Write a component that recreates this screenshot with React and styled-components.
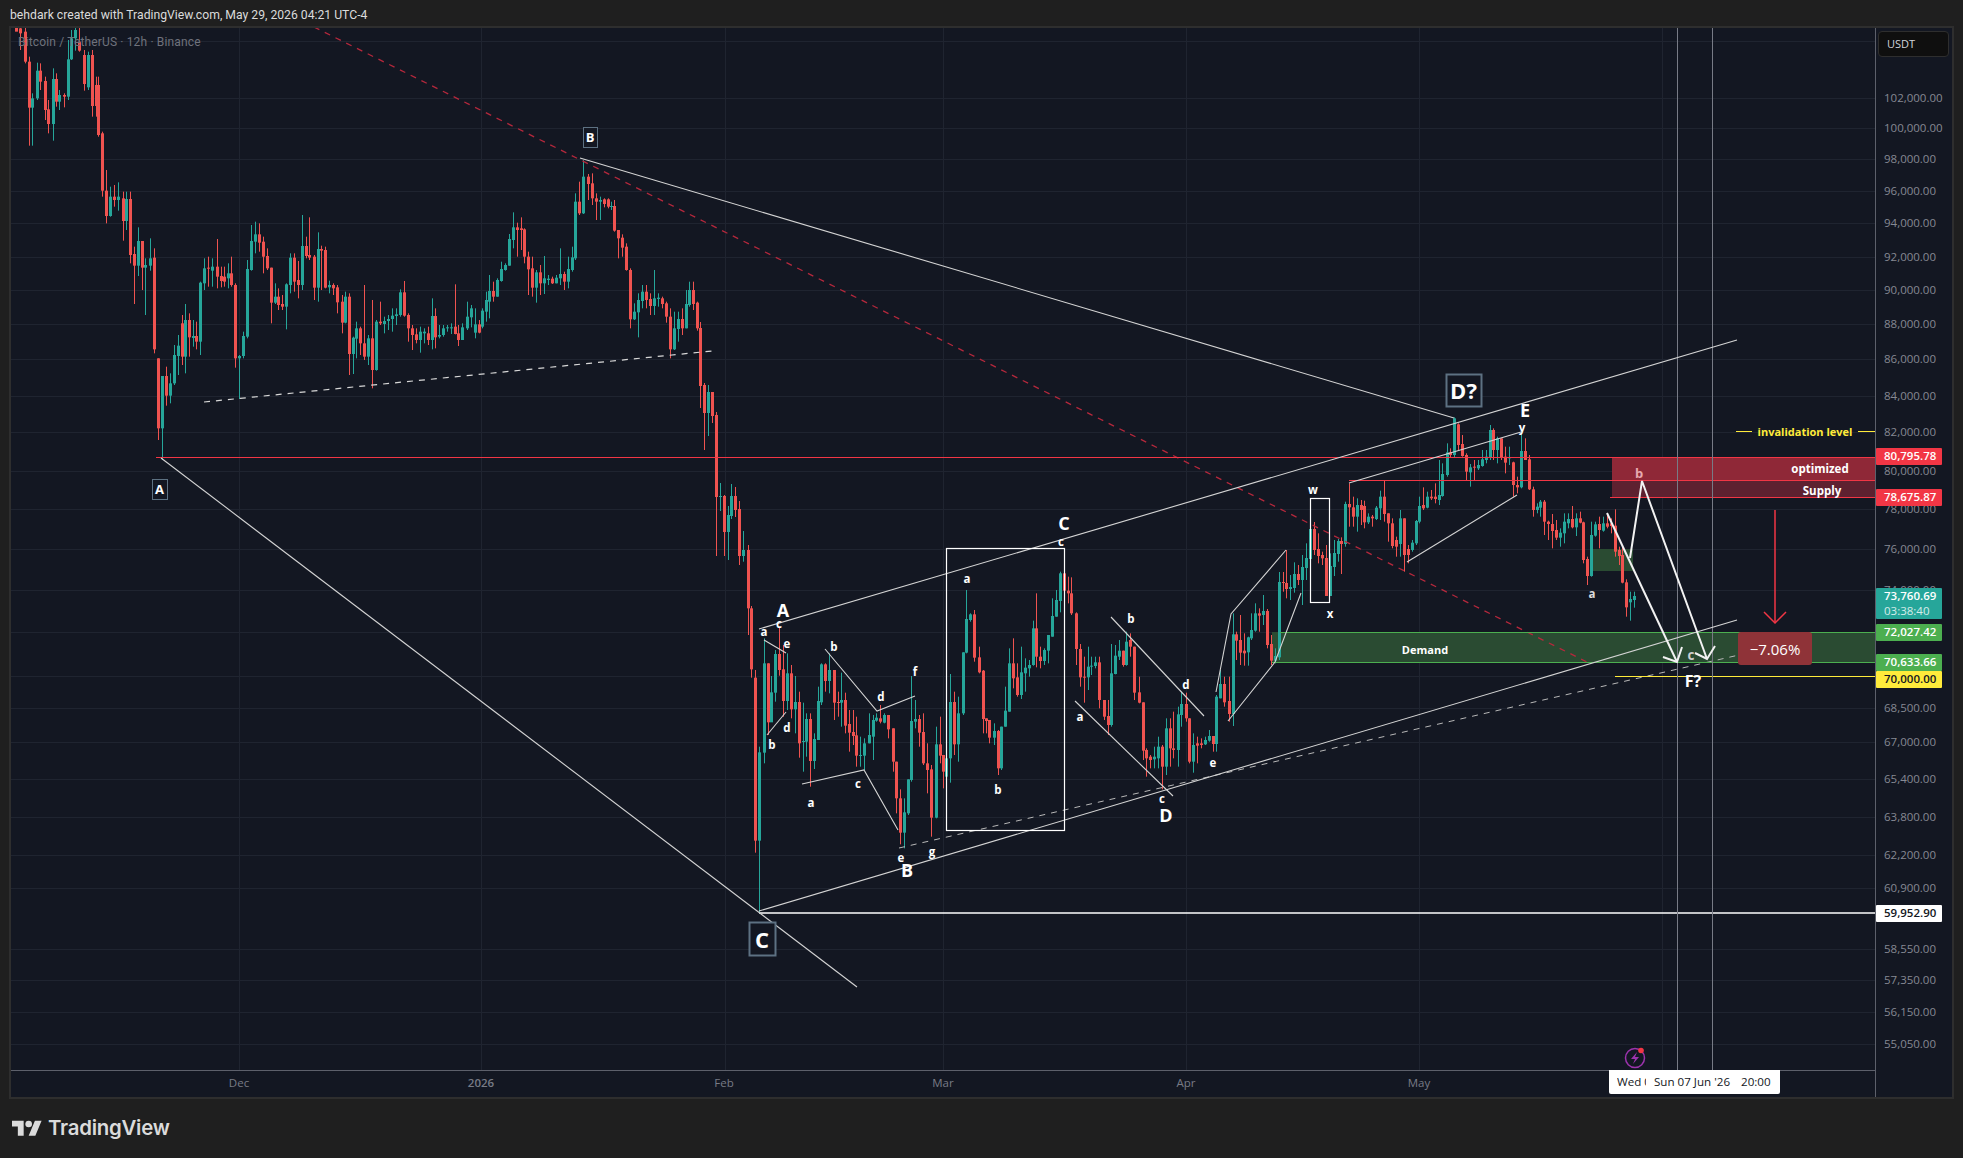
import React from "react";
import styled, { createGlobalStyle } from "styled-components";

const Global = createGlobalStyle`
  html, body { margin: 0; padding: 0; background: #1f1f1f; }
  body { font-family: "Open Sans", "Noto Sans", sans-serif; }
`;

const Page = styled.div`
  width: 1963px;
  height: 1158px;
  display: flex;
  flex-direction: column;
  background: #1f1f1f;
  overflow: hidden;
`;
const Header = styled.header`
  height: 26px;
  flex: none;
  padding: 4px 0 0 10px;
  box-sizing: border-box;
  display: flex;
  align-items: center;
  color: #dbdbdb;
  font: 400 12.2px/1 Roboto, "Open Sans", sans-serif;
`;
const Frame = styled.main`
  flex: none;
  width: 1941px;
  height: 1069px;
  margin-left: 9px;
  display: grid;
  grid-template-columns: 1865px 76px;
  grid-template-rows: 1043px 26px;
  background: #131722;
  border: 2px solid #2e2e2e;
`;
const Plot = styled.section`
  position: relative;
  border-right: 1px solid #5d606b;
  border-bottom: 1px solid #5d606b;
  overflow: hidden;
`;
const ChartSvg = styled.svg`
  display: block;
  width: 1864px;
  height: 1042px;
`;
const SymbolTitle = styled.div`
  position: absolute;
  left: 7px;
  top: 7px;
  color: #6f727c;
  font: 400 12px/1.2 Roboto, sans-serif;
  letter-spacing: 0.15px;
`;
const PriceAxis = styled.aside`
  position: relative;
  overflow: hidden;
  padding: 3px 3px 0 2px;
`;
const UnitBox = styled.div`
  height: 26px;
  box-sizing: border-box;
  background: #0f0f0f;
  border: 1px solid #2e2e2e;
  border-radius: 4px;
  color: #d1d4dc;
  font: 400 11px/24px "Open Sans", sans-serif;
  padding-left: 8px;
`;
const PriceTick = styled.span.attrs((p) => ({ style: { top: p.$y - 28 - 8 } }))`
  position: absolute;
  left: 8px;
  color: #868993;
  font: 400 11.5px/16px "Open Sans", sans-serif;
  white-space: nowrap;
`;
const PriceTag = styled.div.attrs((p) => ({ style: { top: p.$y - 28 } }))`
  position: absolute;
  left: 0;
  width: 66px;
  height: ${(p) => p.$h || 17}px;
  box-sizing: border-box;
  padding-left: 8px;
  border-radius: 1px;
  background: ${(p) => p.$bg};
  color: ${(p) => p.$fg};
  font: 600 11.5px/16px "Open Sans", sans-serif;
  white-space: nowrap;
`;
const Countdown = styled.div`
  line-height: 13px;
  font-weight: 400;
  opacity: 0.8;
`;
const TimeAxis = styled.nav`
  position: relative;
  overflow: visible;
  color: #787b86;
  font: 400 11.5px/1 "Open Sans", sans-serif;
`;
const TimeLabel = styled.span.attrs((p) => ({ style: { left: p.$x - 11 } }))`
  position: absolute;
  top: 6px;
  transform: translateX(-50%);
  font-weight: ${(p) => (p.$strong ? 600 : 400)};
`;
const CrossTip = styled.div`
  position: absolute;
  left: 1598px;
  top: -1px;
  width: 171px;
  height: 24px;
  display: flex;
  align-items: center;
  background: #fff;
  border-radius: 0 0 2px 2px;
  color: #131722;
  font: 400 11.6px/1 "Open Sans", sans-serif;
  white-space: nowrap;
`;
const CutDate = styled.span`
  width: 29px;
  margin: 0 8px 0 8px;
  overflow: hidden;
`;
const TipTime = styled.span`
  margin-left: 11px;
`;
const AxisCorner = styled.div`
  border-left: 1px solid #5d606b;
  margin-left: -1px;
`;
const Footer = styled.footer`
  flex: 1;
  display: flex;
  align-items: center;
  gap: 6px;
  padding: 0 0 0 12px;
  color: #dbdbdb;
  font: 600 20.4px/1 Inter, sans-serif;
  letter-spacing: -0.25px;
`;
const Note = styled.text`
  font-family: "Open Sans", sans-serif;
  font-weight: ${(p) => p.$w || 700};
  font-size: ${(p) => p.$s || 10.5}px;
  fill: ${(p) => p.$c || "#ffffff"};
  text-anchor: middle;
  dominant-baseline: central;
`;

/* [x, top, bottom, green, wickTop, wickBottom] in the coordinates of a traced window */
const TRACE = [
  { ox: 0, oy: 0, sx: 2.24, d: [
    [36,70,95,0],[45,85,100,0,70,150],[55,95,185,0,80,190],[65,185,323,0,170,437],[72,295,323,1,280,437],[82,212,295,1,188,300],[90,212,245,0,190,270],[100,243,330,0,230,360],[108,328,372,0,300,400],[118,237,372,1,205,422],[125,237,305,0,220,320],[133,285,305,1,270,330],[143,285,290,0,280,322],[152,178,290,1,120,300],[160,115,178,1,90,180],[168,90,115,1,82,152],[178,125,152,0,80,155],[188,165,252,0,150,272],[197,165,262,1,155,270],[205,165,318,0,150,350],[216,255,318,0,230,350],[220,255,405,0,230,410],
    [229,400,572,0,395,590],[238,572,648,0,510,670],[247,590,648,1,560,650],[256,590,600,0,555,620],[265,590,600,1,547,632],[275,595,663,0,575,722],[283,597,663,1,575,690],[292,597,765,0,575,790],[301,762,797,0,740,912],[310,723,797,1,682,828],[317,723,803,0,723,870],[325,795,803,1,775,945],[335,775,797,1,715,812],[344,773,1048,0,745,1060],[353,1075,1285,0,1075,1320],[362,1128,1285,1,1128,1380],[371,1128,1187,0,1100,1217],[380,1150,1187,1,1120,1210],[389,1065,1150,1,1035,1155],[398,1037,1068,1,1005,1125],[407,970,1070,0,945,1095],[414,960,1070,1,912,1120],[423,960,1012,0,940,1070],[432,1008,1014,1,960,1040],[440,1008,1025,0,965,1048],[449,848,1025,1,845,1065],
    [458,805,850,1,775,870],[467,803,806,0,770,860],[476,800,812,1,775,860],[485,800,830,0,717,865],[494,828,843,0,800,862],[502,830,845,0,800,860],[510,820,835,1,790,865],[518,820,855,0,770,860],[527,855,1075,0,850,1103],[536,1068,1075,1,1065,1197],[545,1008,1068,1,995,1075],[554,807,1010,1,780,1015],[563,723,810,1,675,812],[572,703,725,1,665,760],[581,703,728,0,670,755],[590,725,770,0,710,820],[597,768,805,0,745,810],[606,803,908,0,803,970],[615,890,908,1,850,912],[623,890,915,0,865,930],[632,912,920,0,885,930],[641,853,920,1,850,988],[650,773,855,1,760,880],[659,773,845,0,760,875],[668,840,855,0,783,895],[677,738,855,1,645,870],[686,738,768,0,710,775],[692,765,773,0,652,780],[703,770,863,0,765,900],[712,747,863,1,697,905],[720,747,752,0,737,870],[729,750,863,0,740,865],[738,855,862,1,842,880],[747,855,865,0,850,885],[755,862,907,0,855,940],[765,905,968,0,885,1000],[773,890,968,1,875,970],
    [782,890,1062,0,880,1125],[790,1013,1062,1,1010,1122],[798,985,1016,1,965,1075],[807,985,1030,0,980,1065],[816,1030,1070,0,855,1080],[825,1015,1070,1,1005,1095],[834,1015,1110,0,900,1165],[843,965,1110,1,960,1112],[851,965,970,0,905,975],[860,963,972,1,950,1000],[870,957,963,1,945,990],[878,947,957,1,925,995],[887,943,948,1,925,975],[895,877,945,1,868,950],[904,877,947,0,843,950],[913,945,985,0,940,1025],[922,985,1005,0,975,1050],[931,1003,1020,0,985,1030],[940,995,1020,1,980,1058],[949,995,1000,1,985,1030],[958,1000,1020,0,980,1035],[967,948,1020,1,895,1048],[975,948,1012,0,925,1045],[984,1005,1010,1,975,1015],[993,985,1005,1,975,1010],[1001,982,985,1,975,995],[1010,982,985,1,970,1002],[1019,980,1002,0,853,1003],[1027,1000,1020,0,975,1038],[1036,982,1020,1,970,1020],[1045,950,985,1,905,990],[1054,925,952,1,915,982],[1063,973,998,1,925,1015],[1072,973,998,0,960,1000],[1079,932,980,1,925,985],[1088,900,935,1,875,965],[1096,873,905,1,825,955],[1105,873,890,0,845,905],[1114,840,890,1,835,890],[1123,807,843,1,785,845],[1132,795,810,1,790,812],[1141,717,797,1,702,797],[1150,682,720,1,637,745],[1159,682,690,0,668,770],[1166,685,690,0,652,750],[1174,688,770,0,685,790],[1183,770,808,0,755,885],[1192,805,863,0,770,890],[1201,817,863,1,810,908],[1210,817,850,0,795,885],[1219,835,850,1,768,882],[1228,836,840,1,825,855],[1237,836,850,0,830,852],[1246,833,850,1,825,850],[1255,822,835,1,745,855],[1264,822,845,0,815,870],[1273,807,845,1,770,865],[1281,772,810,1,740,815],[1289,605,775,1,580,780],[1298,605,640,0,545,645],[1307,530,640,1,480,642],[1316,530,552,0,522,600],[1325,550,595,0,520,615],[1334,595,605,0,580,660],[1343,600,605,1,590,660],[1352,598,612,0,595,622],[1361,598,620,0,595,625],[1368,618,620,1,605,630],[1376,618,692,0,600,695],[1385,690,715,0,690,775],[1394,713,743,0,703,770],[1403,740,810,0,730,812],[1412,810,958,0,805,985],[1421,935,958,1,910,960],[1430,900,937,1,880,1012],[1439,875,903,1,855,925],[1448,875,900,0,855,925],[1456,897,918,0,880,945],[1465,895,918,1,810,945],[1474,893,897,1,880,920],[1483,895,912,0,890,925],[1492,910,950,0,905,968],[1501,950,1048,0,925,1075],[1510,985,1048,1,935,1050],[1519,957,987,1,935,1025],[1528,957,985,0,925,1005],[1537,912,985,1,870,985],[1544,870,915,1,845,920],[1553,870,912,0,845,930],
    [1562,908,985,0,905,992],
  ] },
  { ox: 660, oy: 260, sx: 3, d: [
    [121,204,378,0,186,444],[133,375,459,0,369,570],[145,396,459,1,375,528],[157,396,468,0,396,489],[169,465,711,0,456,888],[181,708,711,1,669,753],[193,708,816,0,705,888],[205,765,816,1,738,900],[214,708,768,1,672,777],[226,708,750,0,681,771],[238,747,888,0,723,915],[250,870,888,1,813,905],
  ] },
  { ox: 700, oy: 500, sx: 2.8, d: [
    [133,150,325,0,135,405],[143,325,508,0,318,533],[155,533,1022,0,510,1058],[166,757,1022,1,740,1236],[178,490,758,1,415,790],[189,490,667,0,490,705],[199,577,667,1,528,665],[209,462,578,1,450,605],[220,462,510,0,380,527],[231,508,603,0,435,650],[243,520,603,1,460,630],[254,520,628,0,495,655],[265,606,628,1,528,700],[276,606,730,0,575,773],[287,723,726,1,608,815],[298,657,725,1,640,770],[309,657,783,0,640,860],[320,717,783,1,700,807],[329,603,720,1,560,720],[340,493,607,1,490,615],[351,493,543,0,490,575],[362,510,543,1,460,580],[374,510,608,0,510,660],[385,606,608,0,575,650],[396,600,608,1,518,680],[407,600,677,0,578,700],[418,672,698,0,630,755],[429,696,708,0,630,735],[438,706,767,0,650,800],[449,765,768,1,710,800],[460,730,767,1,715,810],[472,705,730,1,640,730],[483,660,710,1,645,780],[494,653,662,1,640,665],[505,655,665,0,615,670],[516,645,668,1,640,670],[527,645,688,0,645,715],[539,685,785,0,685,815],[549,785,895,0,785,940],[559,895,998,0,868,1033],[570,937,998,1,895,1045],[581,838,940,1,838,945],[592,663,840,1,528,845],[603,657,665,1,600,685],[614,657,698,0,645,740],[625,696,790,0,640,795],[636,790,810,0,730,880],[648,808,953,0,795,1010],[660,733,953,1,680,955],[671,733,767,0,650,790],[680,765,815,0,765,865],[690,775,830,1,720,830],[701,606,775,1,522,848],[712,606,733,0,575,765],[723,640,733,1,590,785],[735,457,640,1,457,645],[746,357,458,1,270,460],[757,343,360,1,340,365],[768,343,473,0,330,485],[780,472,517,0,440,520],[791,512,657,0,510,700],[800,655,663,0,655,700],[810,660,713,0,660,730],[822,693,713,1,670,735],[833,693,805,0,690,825],[844,680,805,1,680,810],[855,632,680,1,560,680],[866,490,635,1,445,635],[877,490,535,0,415,565],[888,532,585,0,490,590],[899,517,585,1,440,597],[910,503,520,1,475,575],[920,495,505,1,480,530],[931,385,495,1,362,497],[942,385,470,0,280,502],[953,470,483,0,440,505],[964,450,483,1,445,495],[975,405,452,1,405,490],[986,348,410,1,295,410],[997,300,350,1,270,350],[1008,220,303,1,215,337],[1020,220,272,0,148,280],[1030,272,280,0,230,310],[1040,280,340,0,232,345],[1052,340,447,0,337,495],[1063,447,532,0,432,560],[1074,530,532,0,470,608],[1085,500,532,1,440,570],[1096,497,498,1,470,525],[1107,487,498,1,470,505],[1118,487,600,0,470,625],[1130,600,650,0,600,660],[1141,648,675,0,600,705],[1152,520,675,1,432,680],[1161,467,522,1,435,523],[1172,452,470,1,420,480],[1183,452,495,0,452,500],[1194,425,495,1,395,497],[1205,420,440,0,400,470],[1216,440,578,0,440,600],[1228,577,608,0,530,610],[1239,607,752,0,607,780],[1250,750,775,0,745,830],[1261,770,780,0,765,805],[1272,770,778,1,740,805],[1282,740,775,1,710,805],[1293,740,800,0,735,868],[1304,685,800,1,655,825],[1315,685,745,0,655,800],[1325,745,750,0,635,775],[1337,643,750,1,620,800],[1348,612,645,1,575,680],[1360,612,655,0,578,665],[1370,655,785,0,655,790],[1381,735,785,1,700,818],[1392,730,737,0,710,790],[1403,730,735,0,715,745],[1414,720,733,1,710,735],[1425,708,722,1,690,725],[1435,708,732,0,708,755],[1446,590,732,1,585,755],[1457,552,595,1,510,595],[1468,552,607,0,530,620],[1480,603,642,0,530,665],[1491,403,642,1,340,678],[1502,403,422,0,395,480],[1511,420,458,0,345,495],[1522,452,460,0,400,497],[1533,412,457,1,410,497],[1544,390,415,1,340,420],[1555,340,392,1,310,395],[1565,340,347,0,325,395],
  ] },
  { ox: 1200, oy: 520, sx: 3, d: [
    [190,273,285,1,225,315],[202,273,375,0,267,385],[214,372,422,0,345,435],[226,408,422,1,385,430],[238,186,412,1,156,420],[248,186,187,0,156,215],[259,189,207,0,90,235],[271,201,207,1,165,240],[283,162,204,1,127,218],[295,162,180,0,135,195],[307,141,180,1,105,255],[319,114,144,1,70,180],[331,27,117,1,0,120],[343,27,90,0,6,105],[355,87,108,0,40,130],[365,105,115,0,95,135],[377,114,228,0,75,228],[389,138,228,1,100,228],[401,99,141,1,60,168],[413,63,102,1,57,125],[424,63,72,0,52,162],
  ] },
  { ox: 1250, oy: 370, sx: 3, d: [
    [286,402,522,1,395,530],[298,402,412,0,340,470],[310,412,440,0,380,470],[322,405,440,1,385,485],[333,405,420,0,390,465],[343,408,457,0,392,475],[355,440,457,1,430,462],[367,440,445,0,435,470],[379,413,447,1,408,450],[391,380,415,1,362,450],[403,380,432,0,330,455],[415,430,460,0,430,515],[427,460,528,0,445,535],[439,510,530,0,500,560],[451,445,522,1,420,560],[463,445,555,0,445,605],[473,537,555,0,525,580],[485,518,540,1,510,545],[497,453,520,1,450,525],[507,408,455,1,380,460],[519,405,415,0,352,420],[531,380,413,1,365,415],[543,380,385,0,360,390],[555,380,387,0,340,400],[567,375,390,1,270,405],[577,312,378,1,280,380],[591,247,315,1,220,320],[601,247,255,0,235,262],[613,145,255,1,142,262],[625,163,225,0,160,240],[637,222,258,0,195,260],[649,255,305,0,250,330],[661,292,307,1,282,350],[673,290,293,0,270,330],[685,285,295,1,270,300],[697,268,288,1,240,290],[709,260,270,1,240,280],[721,180,262,1,165,270],[730,180,240,0,175,270],[742,205,240,1,200,280],[754,205,262,0,205,270],[766,260,278,0,230,310],[778,262,265,1,230,285],[790,277,345,0,275,380],[802,345,352,0,320,370],[814,243,352,1,190,355],[826,243,270,0,205,270],[838,268,358,0,255,360],[848,358,420,0,350,440],[860,410,420,1,400,430],[871,395,413,1,390,440],[883,395,455,0,390,495],[895,455,462,0,452,510],[907,462,483,0,432,535],[919,480,503,0,450,510],[931,488,503,1,475,530],[943,455,490,1,430,520],[955,447,460,1,430,475],[967,447,472,0,408,475],[979,445,472,1,430,498],[989,445,458,0,425,460],[1000,457,570,0,455,580],[1012,567,618,0,560,645],[1024,495,618,1,455,620],[1036,463,497,1,455,500],[1048,462,480,0,440,535],[1060,460,482,1,440,485],[1072,460,470,0,430,475],[1084,460,468,0,445,490],[1096,467,545,0,418,560],[1108,540,558,0,530,585],[1117,555,638,0,530,640],[1129,637,712,0,628,740],[1141,687,697,1,665,752],[1153,678,690,1,665,713],
  ] },
];

const CANDLES = TRACE.flatMap(({ ox, oy, sx, d }) =>
  d.map(([x, t, b, g, wt, wb]) => {
    const cx = Math.round(ox + x / sx);
    const y = (v) => oy + v / 3;
    return { cx, g, top: y(t), bottom: y(b), hi: y(wt), lo: y(wb) };
  })
);

const H_GRID = [41, 98, 128, 159, 191, 223, 257, 290, 324, 359, 396, 432, 471, 509, 549, 590, 632, 676, 708, 742, 779, 817, 855, 888, 949, 980, 1012, 1044];
const V_GRID = [239, 481, 725, 943, 1186, 1419, 1662];

const PRICES = [
  ["102,000.00", 98], ["100,000.00", 128], ["98,000.00", 159], ["96,000.00", 191], ["94,000.00", 223], ["92,000.00", 257], ["90,000.00", 290], ["88,000.00", 324], ["86,000.00", 359], ["84,000.00", 396], ["82,000.00", 432], ["80,000.00", 471], ["78,000.00", 509], ["76,000.00", 549], ["74,000.00", 590], ["68,500.00", 708], ["67,000.00", 742], ["65,400.00", 779], ["63,800.00", 817], ["62,200.00", 855], ["60,900.00", 888], ["58,550.00", 949], ["57,350.00", 980], ["56,150.00", 1012], ["55,050.00", 1044],
];
const TAGS = [
  ["80,795.78", 448, "#f23645", "#fff"],
  ["78,675.87", 489, "#f23645", "#fff"],
  ["72,027.42", 624, "#4caf50", "#fff"],
  ["70,633.66", 654, "#4caf50", "#fff"],
  ["70,000.00", 671, "#ffeb3b", "#131722"],
  ["59,952.90", 905, "#ffffff", "#131722"],
];
const MONTHS = [["Dec", 239], ["2026", 481, true], ["Feb", 724], ["Mar", 943], ["Apr", 1186], ["May", 1419]];

const THIN = [
  [580, 158, 1454, 418], [161, 458, 857, 987], [759, 911, 1737, 620], [759, 629, 1737, 340],
  [764, 640, 786, 653], [767, 735, 786, 712],
  [802, 784, 864, 770, 898, 830], [825, 649, 877, 711, 915, 696],
  [1075, 701, 1173, 796], [1111, 617, 1204, 716],
  [1216, 692, 1231, 614, 1286, 550], [1228, 721, 1275, 662, 1301, 593],
  [1349, 483, 1521, 432], [1407, 562, 1517, 495],
];
const SMALL = [
  ["a", 764, 631], ["c", 779, 623], ["e", 787, 643], ["d", 787, 727], ["b", 772, 744],
  ["b", 834, 646], ["a", 811, 802], ["c", 858, 783], ["d", 881, 696], ["f", 915, 671], ["e", 901, 857], ["g", 932, 851],
  ["c", 1061, 541], ["a", 967, 578], ["b", 998, 789],
  ["a", 1080, 716], ["b", 1131, 618], ["d", 1186, 684], ["c", 1162, 798], ["e", 1213, 762],
  ["w", 1313, 489], ["x", 1330, 613], ["y", 1522, 427],
];
const LARGE = [["A", 783, 610], ["B", 907, 870], ["C", 1064, 523], ["D", 1166, 815], ["E", 1525, 410]];
const BOXED = [
  ["B", 583, 127, 14, 20, 13],
  ["A", 152, 479, 15, 20, 13],
  ["C", 749, 922, 26, 33, 22],
  ["D?", 1446, 374, 35, 32, 22],
];

const pts = (a) => a.reduce((s, v, i) => s + v + (i % 2 ? " " : ","), "");

function Chart() {
  return (
    <ChartSvg viewBox="11 28 1864 1042">
      <g stroke="#1f2430" strokeWidth="1">
        {H_GRID.map((y) => <line key={y} x1="10" x2="1875" y1={y + 0.5} y2={y + 0.5} />)}
        {V_GRID.map((x) => <line key={x} x1={x + 0.5} x2={x + 0.5} y1="26" y2="1070" />)}
      </g>
      <rect x="1612" y="457" width="263" height="23" fill="#8f2837" />
      <rect x="1612" y="480" width="263" height="17" fill="#5e2130" />
      <rect x="1272" y="632" width="603" height="30" fill="#2a4b32" />
      <rect x="1593" y="549" width="40" height="22" fill="#2a4b32" />
      <g>
        {CANDLES.map((c, i) => {
          const fill = c.g ? "#26a69a" : "#ef5350";
          return (
            <g key={i} fill={fill}>
              <rect x={c.cx} y={c.hi} width="1" height={Math.max(1, c.lo - c.hi)} />
              <rect x={c.cx - 1} y={c.top} width="3" height={Math.max(1, c.bottom - c.top)} />
            </g>
          );
        })}
      </g>
      <line x1="314" y1="27" x2="1587" y2="662" stroke="#b5283c" strokeWidth="1.3" strokeDasharray="6 6" />
      <line x1="204" y1="402" x2="712" y2="351" stroke="#d8d8d8" strokeWidth="1.2" strokeDasharray="6 6" />
      <line x1="899" y1="848" x2="1765" y2="649" stroke="#b8b8b8" strokeWidth="1" strokeDasharray="6 6" />
      <line x1="156" y1="457.5" x2="1875" y2="457.5" stroke="#f23645" />
      <line x1="1349" y1="480.5" x2="1875" y2="480.5" stroke="#f23645" />
      <line x1="1610" y1="497.5" x2="1875" y2="497.5" stroke="#f23645" />
      <line x1="1280" y1="632.5" x2="1875" y2="632.5" stroke="#4caf50" />
      <line x1="1272" y1="662.5" x2="1875" y2="662.5" stroke="#4caf50" />
      <line x1="1615" y1="676.5" x2="1875" y2="676.5" stroke="#ffeb3b" />
      <line x1="759" y1="913" x2="1875" y2="913" stroke="#ffffff" strokeWidth="1.5" />
      <line x1="1677.5" y1="26" x2="1677.5" y2="1070" stroke="#787b86" />
      <line x1="1712.5" y1="26" x2="1712.5" y2="1070" stroke="#787b86" />
      <g fill="none" stroke="#d4d4d4" strokeWidth="1.1">
        {THIN.map((p, i) => <polyline key={i} points={pts(p)} />)}
      </g>
      <g fill="none" stroke="#ffffff" strokeWidth="1.2">
        <rect x="946.5" y="548.5" width="118" height="282" />
        <rect x="1310.5" y="498.5" width="19" height="104" />
      </g>
      <g fill="none" stroke="#f2f2f2" strokeWidth="2">
        <polyline points="1607,513 1677,662" />
        <polyline points="1663,657 1677,662 1682,647" />
        <polyline points="1630,558 1642,481 1707,659" />
        <polyline points="1695,653 1707,659 1715,646" />
      </g>
      <g fill="none" stroke="#f23645" strokeWidth="1.5">
        <line x1="1775" y1="510" x2="1775" y2="623" />
        <polyline points="1764,612 1775,623 1786,612" />
      </g>
      <rect x="1738" y="632" width="74" height="33" rx="3" fill="#8f3338" />
      <Note x="1775" y="649" $s={15} $w={400}>−7.06%</Note>
      <g stroke="#ffeb3b">
        <line x1="1736" x2="1752" y1="431.5" y2="431.5" />
        <line x1="1858" x2="1875" y1="431.5" y2="431.5" />
      </g>
      <Note x="1805" y="431" $s={11} $c="#ffeb3b">invalidation level</Note>
      <Note x="1820" y="468.5" $s={11.5}>optimized</Note>
      <Note x="1822" y="490.5" $s={11.5}>Supply</Note>
      <Note x="1425" y="649" $s={11}>Demand</Note>
      <Note x="1639" y="473" $s={13} $c="#e6a9af">b</Note>
      <Note x="1691" y="655" $s={13.5} $c="#cfcfcf">c</Note>
      <Note x="1592" y="593" $s={11.5} $c="#dcdcdc">a</Note>
      <Note x="1693" y="681" $s={16}>F?</Note>
      {SMALL.map(([t, x, y], i) => <Note key={i} x={x} y={y} $s={11.5}>{t}</Note>)}
      {LARGE.map(([t, x, y]) => <Note key={t} x={x} y={y} $s={18}>{t}</Note>)}
      {BOXED.map(([t, x, y, w, h, s]) => (
        <g key={t + x}>
          <rect x={x + 0.5} y={y + 0.5} width={w} height={h} fill="#131722" stroke="#5d7182" strokeWidth={s > 15 ? 2 : 1} />
          <Note x={x + w / 2} y={y + h / 2} $s={s}>{t}</Note>
        </g>
      ))}
      <g>
        <circle cx="1635" cy="1058" r="9.5" fill="none" stroke="#9c33ad" strokeWidth="1.5" />
        <path d="M1637 1052l-6 7h4l-2 5 6-7h-4z" fill="#9c33ad" />
        <circle cx="1641" cy="1050.5" r="2.8" fill="#f23645" />
      </g>
    </ChartSvg>
  );
}

export default function App() {
  return (
    <Page>
      <Global />
      <Header>behdark created with TradingView.com, May 29, 2026 04:21 UTC-4</Header>
      <Frame>
        <Plot>
          <Chart />
          <SymbolTitle>Bitcoin / TetherUS · 12h · Binance</SymbolTitle>
        </Plot>
        <PriceAxis>
          <UnitBox>USDT</UnitBox>
          {PRICES.map(([t, y]) => <PriceTick key={t} $y={y}>{t}</PriceTick>)}
          {TAGS.map(([t, y, bg, fg]) => <PriceTag key={t} $y={y} $bg={bg} $fg={fg}>{t}</PriceTag>)}
          <PriceTag $y={588} $h={31} $bg="#26a69a" $fg="#fff">
            73,760.69
            <Countdown>03:38:40</Countdown>
          </PriceTag>
        </PriceAxis>
        <TimeAxis>
          {MONTHS.map(([t, x, s]) => <TimeLabel key={t} $x={x} $strong={s}>{t}</TimeLabel>)}
          <CrossTip>
            <CutDate>Wed 03</CutDate>
            <span>Sun 07 Jun '26</span>
            <TipTime>20:00</TipTime>
          </CrossTip>
        </TimeAxis>
        <AxisCorner />
      </Frame>
      <Footer>
        <svg width="30" height="24" viewBox="0 0 36 28" fill="#dbdbdb">
          <path d="M14 22H7V11H0V4h14v18zM28 22h-8l7.5-18h8L28 22z" />
          <circle cx="20" cy="8" r="4" />
        </svg>
        TradingView
      </Footer>
    </Page>
  );
}
